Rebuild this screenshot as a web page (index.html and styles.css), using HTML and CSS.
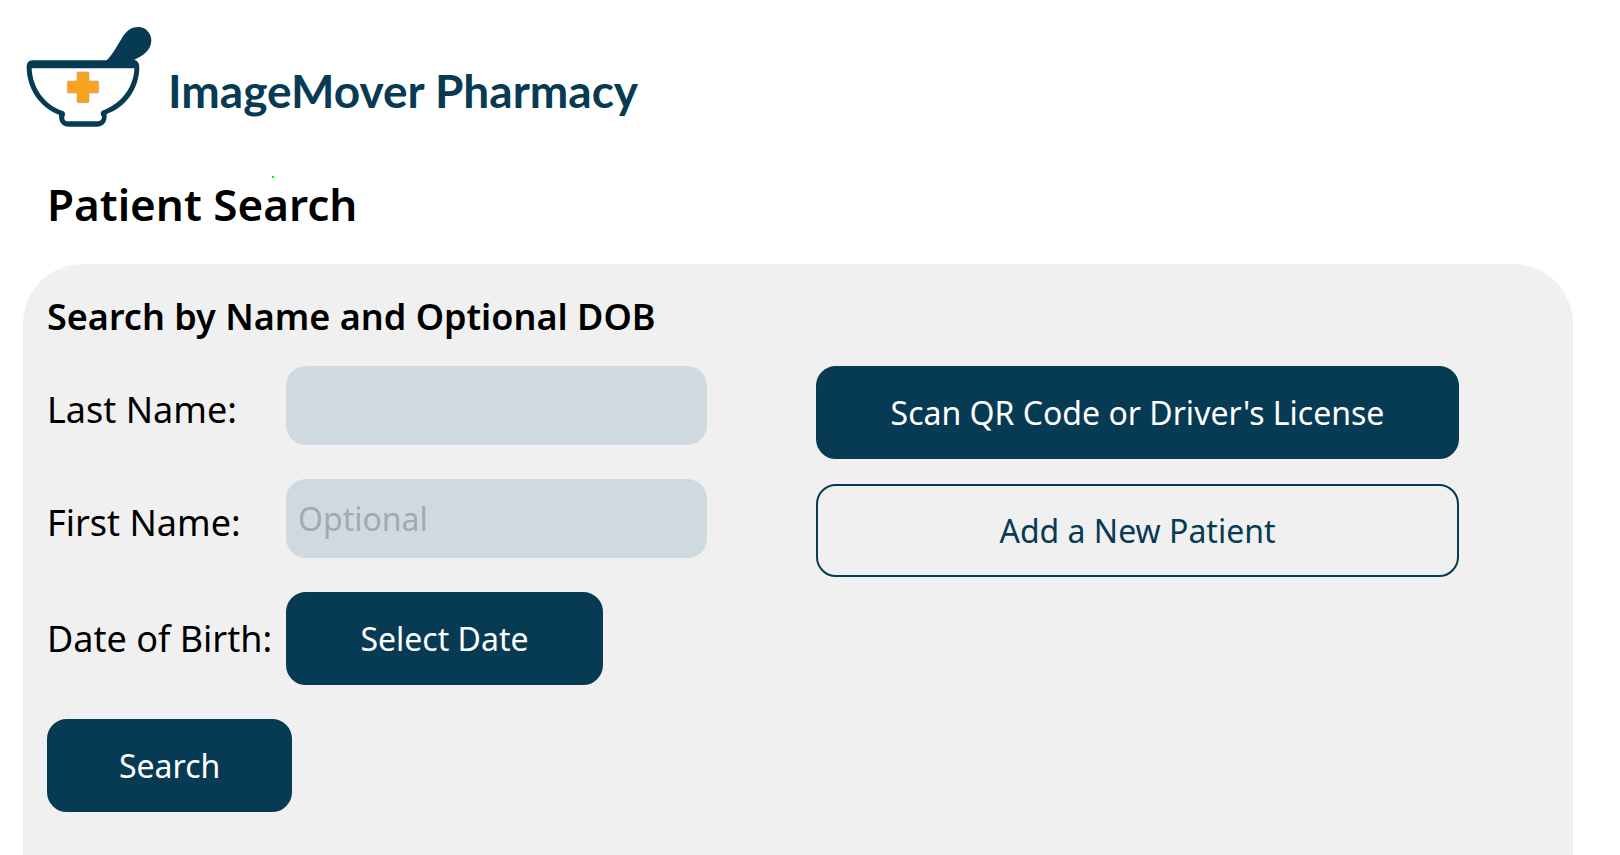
FILE: index.html
```html
<!DOCTYPE html>
<html lang="en">
<head>
  <meta charset="UTF-8">
  <meta name="viewport" content="width=device-width, initial-scale=1">
  <title>ImageMover Pharmacy</title>
  <link rel="stylesheet" href="styles.css">
</head>
<body>

  <header class="brand">
    <svg class="brand-logo" viewBox="78 48 378 303" aria-hidden="true">
      <path fill="#063b53" d="M318 153 C332 140 346 117 361 92 C377 64 392 51 415 51 C437 51 454 69 454 91 C454 119 431 137 403 149 Q417 154 417 170 H390 L300 160 Z"/>
      <path fill="#063b53" fill-rule="evenodd" d="M97 151 H400 Q418 153 418 171 C418 235 378 292 320 312 Q322 349 290 350 H207 Q176 349 177 314 C119 292 80 235 80 170 Q80 152 97 151 Z M95 175 C97 235 136 286 186 302 Q196 304 195 314 C190 325 194 334 204 334 H292 Q306 333 306 321 C299 307 302 303 314 299 C365 279 402 230 403 175 Z"/>
      <path fill="#faa31e" stroke="#b9a98a" stroke-width="2" d="M235 186 H263 Q267 186 267 190 V213 H292 Q296 213 296 217 V245 Q296 249 292 249 H267 V274 Q267 278 263 278 H235 Q231 278 231 274 V249 H206 Q202 249 202 245 V217 Q202 213 206 213 H231 V190 Q231 186 235 186 Z"/>
    </svg>
    <span class="brand-name">ImageMover Pharmacy</span>
  </header>

  <h1 class="title">Patient Search</h1>

  <main class="panel">
    <h2>Search by Name and Optional DOB</h2>

    <div class="columns">
      <form class="search-form">
        <div class="row text-row">
          <label for="lastName">Last Name:</label>
          <input type="text" id="lastName">
        </div>
        <div class="row text-row">
          <label for="firstName">First Name:</label>
          <input type="text" id="firstName" placeholder="Optional">
        </div>
        <div class="row">
          <label for="dob">Date of Birth:</label>
          <button type="button" id="dob" class="date">Select Date</button>
        </div>
        <button type="submit" class="search">Search</button>
      </form>

      <div class="actions">
        <button type="button">Scan QR Code or Driver's License</button>
        <button type="button" class="outline">Add a New Patient</button>
      </div>
    </div>
  </main>

</body>
</html>
```

FILE: styles.css
```css
* {
  box-sizing: border-box;
}

body {
  display: flex;
  flex-direction: column;
  min-height: 100vh;
  margin: 0;
  font-family: "Noto Sans", sans-serif;
  color: #000;
  background-color: #fff;
}

.brand {
  display: flex;
  align-items: center;
  gap: 16px;
  padding: 26px 26px 0;
}

.brand-logo {
  width: 126px;
  height: 101px;
}

.brand-name {
  padding-top: 28px;
  font-family: Lato, sans-serif;
  font-size: 46px;
  font-weight: 700;
  line-height: 56px;
  color: #063b53;
}

.title {
  position: relative;
  margin: 47px 47px 0;
  font-size: 44px;
  font-weight: 600;
  line-height: 60px;
}

/* status dot */
.title::after {
  content: "";
  position: absolute;
  top: 2px;
  left: 225px;
  width: 2px;
  height: 2px;
  background-color: #00f000;
}

.panel {
  flex: 1;
  margin: 30px 47px 0 23px;
  padding: 29px 24px 24px;
  background-color: #f0f0f0;
  border-radius: 60px 60px 0 0;
}

h2 {
  margin: 0 0 25px;
  font-size: 36px;
  font-weight: 600;
  line-height: 48px;
}

.columns {
  display: flex;
  flex-wrap: wrap;
  align-items: flex-start;
  gap: 34px 109px;
}

.search-form {
  display: flex;
  flex-direction: column;
  gap: 34px;
}

.row {
  display: grid;
  grid-template-columns: 239px auto;
  align-items: center;
  justify-items: start;
}

label {
  font-size: 36px;
  line-height: 48px;
  white-space: nowrap;
}

.text-row label {
  padding-top: 8px;
}

input {
  width: 421px;
  height: 79px;
  padding: 0 12px;
  font: inherit;
  font-size: 32px;
  background-color: #cfdae0;
  border: none;
  border-radius: 20px;
}

input::placeholder {
  color: #a0abb1;
}

button {
  padding: 24px 70px;
  font: inherit;
  font-size: 32px;
  line-height: 41px;
  color: #fff;
  background-color: #073b53;
  border: 2px solid #073b53;
  border-radius: 20px;
  cursor: pointer;
}

.date {
  min-width: 317px;
}

.search {
  align-self: flex-start;
}

.actions {
  display: flex;
  flex-direction: column;
  gap: 25px;
  min-width: 643px;
}

.outline {
  color: #073b53;
  background-color: transparent;
}
```
